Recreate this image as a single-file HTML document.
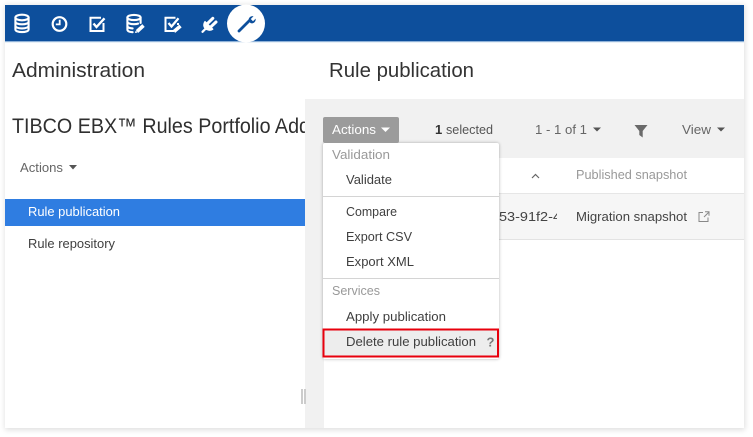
<!DOCTYPE html>
<html><head><meta charset="utf-8"><style>
html,body{margin:0;padding:0;width:753px;height:437px;overflow:hidden;background:#fff}
svg{display:block}
text{font-family:"Liberation Sans",sans-serif;font-size:13px;fill:#3f3f3f}
</style></head><body>
<svg width="753" height="437" viewBox="0 0 753 437" xmlns="http://www.w3.org/2000/svg">
<defs>
<filter id="s" x="-5%" y="-5%" width="110%" height="110%"><feGaussianBlur stdDeviation="3"/></filter>
<filter id="m" x="-10%" y="-10%" width="120%" height="120%"><feGaussianBlur stdDeviation="1.5"/></filter>
<clipPath id="c1"><rect x="5" y="100" width="300" height="50"/></clipPath>
<clipPath id="c2"><rect x="490" y="205" width="67" height="25"/></clipPath>
</defs>
<rect x="5" y="5" width="740" height="425" fill="#000" opacity=".13" filter="url(#s)"/>
<rect x="5" y="5" width="739" height="423" fill="#fff"/>
<rect x="5" y="5" width="739" height="37" fill="#0d4f9c"/>
<rect x="5" y="41" width="739" height="1.2" fill="#8fb2d8"/>

<!-- header icons -->
<g fill="none" stroke="#fff" stroke-width="2.100">
<g stroke-linecap="round">
<ellipse cx="22" cy="17.500" rx="6.600" ry="2.800"/>
<path d="M15.400 17.500V29.500c0 1.600 3 2.600 6.600 2.600s6.600-1 6.600-2.600V17.500M15.400 21.700c0 1.600 3 2.600 6.600 2.600s6.600-1 6.600-2.600M15.400 25.800c0 1.600 3 2.600 6.600 2.600s6.600-1 6.600-2.600"/>
</g>
<circle cx="59.500" cy="24" r="6.800" stroke-width="2.200"/>
<path d="M59.700 19.800V24.400H55.800" stroke-width="1.800"/>
<path d="M103.500 23V31H90.500V17.800H101" stroke-width="2"/>
<path d="M93.500 23.500L96.500 27L104.500 18.300" stroke-width="2.400"/>
<g stroke-linecap="round">
<ellipse cx="134" cy="17.500" rx="6.600" ry="2.600"/>
<path d="M127.400 17.500V29.500c0 1.500 2 2.500 5.200 2.700M140.600 17.500V23M127.400 21.700c0 1.500 3 2.500 6.600 2.500 1.500 0 3-.2 4-.6M127.400 25.800c0 1.500 2.200 2.400 5.200 2.600"/>
</g>
<path d="M137 31.500L143.500 25.500" stroke-width="3.600"/>
<path d="M178 23V25M174 31H165.500V17.800H175.500" stroke-width="2"/>
<path d="M168.500 23L171.500 26.500L178.500 18.300" stroke-width="2.300"/>
<path d="M174 31.500L180.500 26" stroke-width="3.600"/>
</g>
<path d="M135.500 33L134.800 32.200L136 30.800L137.500 32.500Z" fill="#fff"/>
<path d="M202.500 31.800L205.500 28.800" stroke="#fff" stroke-width="2.200" stroke-linecap="round"/>
<path d="M205 21.500L212.800 29.200C210.300 30.800 207.200 30.500 205.200 28.600C203.300 26.600 203.300 23.800 205 21.500Z" fill="#fff" stroke="#fff" stroke-width="1.200" stroke-linejoin="round"/>
<path d="M207.800 23.200L212.800 18.300M211 26.700L216 22" stroke="#fff" stroke-width="3" stroke-linecap="round"/>

<circle cx="246" cy="23.500" r="19" fill="#fff"/>
<path d="M239 31L249.500 20.500" stroke="#0d4f9c" stroke-width="2.800" stroke-linecap="round"/>
<path d="M249 21.500C247.800 18.500 250 15.800 253.500 16.200L250.800 19L253 21.200L255.700 18.600C256 22 253 24.200 250.500 23Z" fill="#0d4f9c"/>

<!-- left -->
<text x="12" y="77" style="font-size:20px;fill:#333" textLength="133" lengthAdjust="spacingAndGlyphs">Administration</text>
<g clip-path="url(#c1)"><text x="12" y="133" style="font-size:21px;fill:#2f2f2f" textLength="298" lengthAdjust="spacingAndGlyphs">TIBCO EBX™ Rules Portfolio Add</text></g>
<text x="20" y="172" style="fill:#666" textLength="43" lengthAdjust="spacingAndGlyphs">Actions</text>
<path d="M69 165H77L73 169.500Z" fill="#555"/>
<rect x="5" y="199" width="300" height="27" fill="#2f7de1"/>
<text x="28" y="216" style="fill:#fff" textLength="92" lengthAdjust="spacingAndGlyphs">Rule publication</text>
<text x="28" y="248" textLength="87" lengthAdjust="spacingAndGlyphs">Rule repository</text>

<!-- right -->
<text x="329" y="77" style="font-size:20px;fill:#333" textLength="145" lengthAdjust="spacingAndGlyphs">Rule publication</text>
<rect x="305" y="99" width="439" height="329" fill="#f1f1f1"/>
<rect x="301" y="389" width="2" height="15" fill="#ccc"/>
<rect x="304" y="389" width="2" height="15" fill="#ccc"/>
<rect x="324" y="158" width="420" height="270" fill="#fff"/>
<rect x="324" y="193" width="420" height="1" fill="#e6e6e6"/>
<rect x="324" y="194" width="420" height="45" fill="#f6f6f6"/>
<rect x="324" y="239" width="420" height="1" fill="#e3e3e3"/>

<text x="435" y="134" style="fill:#333;font-weight:bold">1</text>
<text x="446" y="134" style="fill:#555" textLength="47" lengthAdjust="spacingAndGlyphs">selected</text>
<text x="535" y="134" style="fill:#666" textLength="52" lengthAdjust="spacingAndGlyphs">1 - 1 of 1</text>
<path d="M593 127.500H601L597 131.500Z" fill="#555"/>
<path d="M634.500 125H647.500L642.700 131V137.500L639.300 135V131Z" fill="#6a6a6a"/>
<text x="682" y="134" style="fill:#666" textLength="29" lengthAdjust="spacingAndGlyphs">View</text>
<path d="M717 127.500H725L721 131.500Z" fill="#555"/>

<path d="M532 178L535.500 174.500L539 178" fill="none" stroke="#666" stroke-width="1.200"/>
<text x="576" y="179" style="fill:#999" textLength="111" lengthAdjust="spacingAndGlyphs">Published snapshot</text>
<g clip-path="url(#c2)"><text x="499" y="221" style="fill:#444" textLength="62" lengthAdjust="spacingAndGlyphs">53-91f2-4</text></g>
<text x="576" y="221" style="fill:#444" textLength="111" lengthAdjust="spacingAndGlyphs">Migration snapshot</text>
<path d="M703 212.500H699V221.500H708V217.500M704 217L708.500 212.500M705 211.700H709V215.700" fill="none" stroke="#888" stroke-width="1"/>

<!-- menu -->
<rect x="323" y="143" width="176" height="216" rx="2" fill="#000" opacity=".3" filter="url(#m)"/>
<rect x="323" y="143" width="176" height="216" rx="2" fill="#fff"/>
<rect x="323" y="117" width="76" height="26" rx="2" fill="#9b9b9b"/>
<text x="332" y="134" style="fill:#fff" textLength="44" lengthAdjust="spacingAndGlyphs">Actions</text>
<path d="M381 127.500H390L385.500 132Z" fill="#fff"/>
<text x="332" y="159" style="fill:#999" textLength="58" lengthAdjust="spacingAndGlyphs">Validation</text>
<text x="346" y="184" textLength="46" lengthAdjust="spacingAndGlyphs">Validate</text>
<rect x="323" y="196" width="176" height="1" fill="#d4d4d4"/>
<text x="346" y="216" textLength="51" lengthAdjust="spacingAndGlyphs">Compare</text>
<text x="346" y="241" textLength="66" lengthAdjust="spacingAndGlyphs">Export CSV</text>
<text x="346" y="266" textLength="68" lengthAdjust="spacingAndGlyphs">Export XML</text>
<rect x="323" y="278" width="176" height="1" fill="#d4d4d4"/>
<text x="332" y="295" style="fill:#999" textLength="48" lengthAdjust="spacingAndGlyphs">Services</text>
<text x="346" y="321" textLength="100" lengthAdjust="spacingAndGlyphs">Apply publication</text>
<rect x="323.500" y="329.500" width="174.500" height="27" fill="#ededed" stroke="#e8000d" stroke-width="2"/>
<text x="346" y="346" textLength="130" lengthAdjust="spacingAndGlyphs">Delete rule publication</text>
<text x="486.500" y="346.500" style="fill:#777;font-weight:bold;font-size:13px">?</text>
</svg>
</body></html>
